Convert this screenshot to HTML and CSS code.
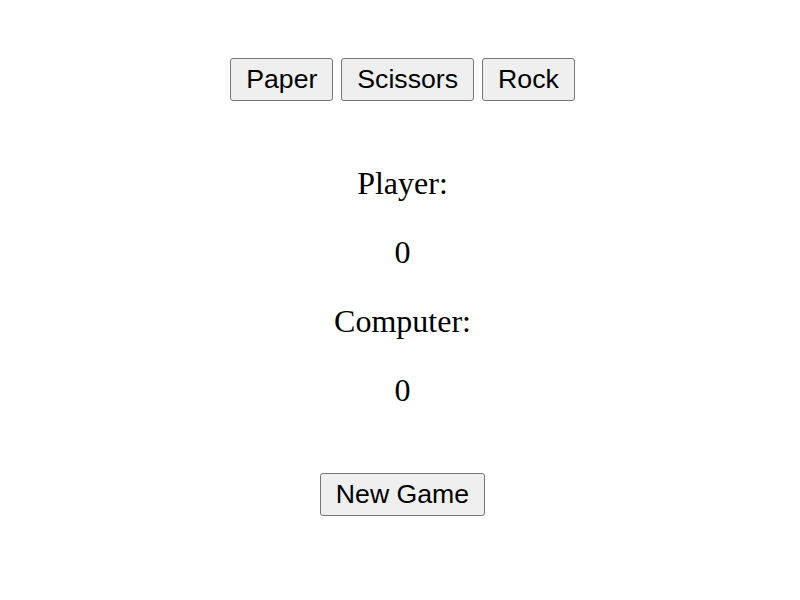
FILE: index.html
```html
<!DOCTYPE html>
<html>
<head>
<meta charset="utf-8">
<link rel="stylesheet" href="styles.css">
</head>
<body>
<div class="game">
  <div class="choices">
    <button class="btn">Paper</button>
    <button class="btn">Scissors</button>
    <button class="btn">Rock</button>
  </div>
  <div class="scores">
    <p class="label">Player:</p>
    <p class="score">0</p>
    <p class="label">Computer:</p>
    <p class="score">0</p>
  </div>
  <div class="actions">
    <button class="btn">New Game</button>
  </div>
</div>
</body>
</html>
```
FILE: styles.css
```css
body {
  margin: 0;
  font-family: "Liberation Serif", "Times New Roman", serif;
  background: #fff;
  color: #000;
}
.game {
  display: flex;
  flex-direction: column;
  align-items: center;
  padding-top: 58px;
  padding-left: 5px;
}
.choices {
  display: flex;
  gap: 8px;
}
.btn {
  font-family: "Liberation Sans", Arial, sans-serif;
  font-size: 26.67px;
  line-height: 31px;
  padding: 5px 15px;
  background: #efefef;
  border: 1px solid #767676;
  border-radius: 3px;
  color: #000;
}
.scores {
  margin-top: 32px;
  text-align: center;
}
.scores p {
  font-size: 32px;
  margin: 32px 0;
}
.actions {
  margin-top: 32px;
}
```
